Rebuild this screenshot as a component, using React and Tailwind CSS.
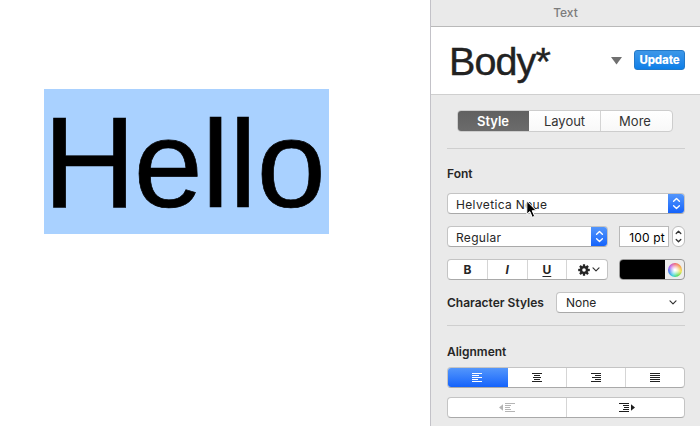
import React from "react";

const field = "border border-[#c4c4c4] border-b-[#a9a9a9] bg-white rounded-[4px]";

function UpDown({ className = "" }) {
  return (
    <span className={`flex w-[17px] items-center justify-center bg-gradient-to-b from-[#5698fb] to-[#0f5ffb] ${className}`}>
      <svg width="9" height="13" viewBox="0 0 9 13" fill="none" stroke="#fff" strokeWidth="1.4" strokeLinecap="round" strokeLinejoin="round">
        <path d="M1.6 4.2 4.5 1.5l2.9 2.7M1.6 8.8l2.9 2.7 2.9-2.7" />
      </svg>
    </span>
  );
}

function Lines({ rows, color }) {
  return (
    <svg width="11" height="10" viewBox="0 0 11 10" fill={color} shapeRendering="crispEdges">
      {rows.map(([x, w], i) => (
        <rect key={i} x={x} y={i * 2} width={w} height="1" />
      ))}
    </svg>
  );
}

function Chevron() {
  return (
    <svg width="8" height="5" viewBox="0 0 8 5" fill="none" stroke="#333" strokeWidth="1.2" strokeLinecap="round" strokeLinejoin="round">
      <path d="m1 .8 3 3 3-3" />
    </svg>
  );
}

function Gear() {
  return (
    <svg width="12" height="12" viewBox="-6 -6 12 12">
      {[0, 45, 90, 135].map((a) => (
        <rect key={a} x="-1.15" y="-5.8" width="2.3" height="11.6" rx=".4" fill="#262626" transform={`rotate(${a})`} />
      ))}
      <circle r="4.1" fill="#262626" />
      <circle r="1.8" fill="#fff" />
    </svg>
  );
}

export default function App() {
  return (
    <div className="relative flex h-[426px] w-[700px] overflow-hidden bg-white font-['Inter','Liberation_Sans',sans-serif] text-[12px] text-[#262626]">
      <main className="w-[430px] shrink-0 pl-[44px] pt-[89px]">
        <div className="h-[145px] w-[285px] whitespace-nowrap bg-[#a9d1ff] font-['Liberation_Sans',Arial,sans-serif] text-[129px] leading-[147px] text-black [-webkit-text-stroke:0.7px_#000]">
          <span className="-ml-[1px] tracking-[-2.5px]">H</span><span className="text-[124px]"><span className="tracking-[-1px]">e</span>llo</span>
        </div>
      </main>

      <aside className="flex w-[270px] shrink-0 flex-col border-l border-[#c3c2c8] bg-[#eaeaea]">
        <header className="h-[27px] border-b border-[#b9b9b9] text-center text-[12px] font-medium leading-[26px] text-[#7c7c7c]">Text</header>
        <section className="flex h-[68px] items-center border-b border-[#cfcfcf] bg-white pl-[18px] pr-[15px]">
          <span className="w-[162px] whitespace-nowrap font-['Liberation_Sans',Arial,sans-serif] text-[39.5px] leading-[66px] tracking-[-0.9px] text-[#222] [-webkit-text-stroke:0.4px_#222]">Body*</span>
          <svg width="11" height="8" viewBox="0 0 11 8"><path d="M0 0h11L5.5 7.5z" fill="#707070" /></svg>
          <button className="-mt-px ml-auto h-[20px] w-[51px] rounded-[3px] border border-[#2379c8] bg-gradient-to-b from-[#3c97e8] to-[#0b7fe8] text-[11.5px] font-extrabold leading-[19px] tracking-[-0.15px] text-white">Update</button>
        </section>

        <div className="flex flex-col pl-[16px] pr-[15px]">
          <nav className="mx-[10px] mt-[15px] flex h-[22px] w-[216px] overflow-hidden rounded-[4px] border border-[#cdcdcd] bg-gradient-to-b from-white to-[#f8f8f8] text-center text-[13px] leading-[21px] text-[#333]">
            <span className="-my-px -ml-px w-[72px] bg-gradient-to-b from-[#606060] to-[#6c6c6c] font-semibold leading-[23px] text-white">Style</span>
            <span className="w-[72px] border-r border-[#d4d4d4]">Layout</span>
            <span className="flex-1 pr-[3px]">More</span>
          </nav>
          <hr className="mt-[16px] border-[#cfcfcf]" />
          <h2 className="mt-[15px] h-[20px] text-[12px] font-semibold leading-[20px]">Font</h2>
          <div className={`mt-[9px] flex h-[21px] justify-between overflow-hidden ${field}`}>
            <span className="pl-[8px] pt-px text-[12px] leading-[20px] tracking-[0.35px]">Helvetica Neue</span>
            <UpDown className="-my-px -mr-px" />
          </div>
          <div className="mt-[12px] flex h-[21px]">
            <div className={`flex w-[161px] justify-between overflow-hidden ${field}`}>
              <span className="pl-[8px] pt-px leading-[20px] tracking-[0.3px]">Regular</span>
              <UpDown className="-my-px -mr-px" />
            </div>
            <div className="ml-[11px] w-[50px] border border-[#b9b9b9] bg-white pr-[3px] pt-px text-right leading-[20px] tracking-[0.2px] text-black">100 pt</div>
            <div className="ml-[3px] flex w-[13px] items-center justify-center rounded-[6px] border border-[#bdbdbd] bg-white">
              <svg width="7" height="13" viewBox="0 0 7 13" fill="none" stroke="#333" strokeWidth="1.3" strokeLinecap="round" strokeLinejoin="round"><path d="M1.2 3.5 3.5 1.2l2.3 2.3M1.2 9.5l2.3 2.3 2.3-2.3" /></svg>
            </div>
          </div>
          <div className="mt-[12px] flex h-[21px]">
            <div className={`grid w-[161px] grid-cols-4 text-center leading-[19px] ${field}`}>
              <span className="border-r border-[#d5d5d5] font-bold">B</span>
              <span className="border-r border-[#d5d5d5] font-bold italic">I</span>
              <span className="border-r border-[#d5d5d5] font-bold underline underline-offset-2">U</span>
              <span className="flex items-center justify-center gap-[2px] pl-[3px]"><Gear /><Chevron /></span>
            </div>
            <div className="ml-[11px] flex w-[66px] overflow-hidden rounded-[4px] border border-[#999] bg-[#ededed]">
              <span className="-my-px -ml-px w-[46px] bg-black" />
              <span className="flex flex-1 items-center justify-center">
                <span className="h-[14px] w-[14px] rounded-full bg-[radial-gradient(circle,#fff_8%,#ffffffa0_32%,#ffffff00_65%),conic-gradient(#ef6a76,#f5a04a,#f1e34d,#58df5a,#38d2e0,#4b76ef,#bf5cea,#ef6a76)]" />
              </span>
            </div>
          </div>
          <div className="mt-[12px] flex h-[21px] items-center justify-between">
            <span className="whitespace-nowrap font-semibold">Character Styles</span>
            <div className={`flex h-[21px] w-[129px] items-center justify-between pl-[9px] pr-[7px] ${field}`}><span>None</span><Chevron /></div>
          </div>
          <hr className="mt-[12px] border-[#cfcfcf]" />
          <h2 className="mt-[16px] h-[20px] font-semibold leading-[20px]">Alignment</h2>
          <div className={`mt-[5px] flex h-[21px] overflow-hidden ${field}`}>
            <span className="-my-px -ml-px flex w-[61px] items-center justify-center bg-gradient-to-b from-[#5698fb] to-[#0f5ffb]"><Lines color="#fff" rows={[[0, 10], [0, 7], [0, 10], [0, 6], [0, 10]]} /></span>
            <span className="flex w-[59px] items-center justify-center border-r border-[#d5d5d5]"><Lines color="#222" rows={[[0, 10], [2, 6], [1, 8], [2, 6], [0, 10]]} /></span>
            <span className="flex w-[59px] items-center justify-center border-r border-[#d5d5d5]"><Lines color="#222" rows={[[0, 10], [4, 6], [1, 9], [4, 6], [0, 10]]} /></span>
            <span className="flex flex-1 items-center justify-center"><Lines color="#222" rows={[[0, 10], [0, 10], [0, 10], [0, 10], [0, 10]]} /></span>
          </div>
          <div className={`mt-[9px] flex h-[21px] ${field}`}>
            <span className="flex w-[119px] items-center justify-center border-r border-[#d5d5d5]">
              <svg width="16" height="9" viewBox="0 0 16 9" fill="#b5b5b5"><path d="M0 4.5 4 1.2v6.6zM6 0h10v1H6zM6 2h6v1H6zM6 4h5v1H6zM6 6h6v1H6zM6 8h10v1H6z" /></svg>
            </span>
            <span className="flex flex-1 items-center justify-center pl-[2px]">
              <svg width="16" height="9" viewBox="0 0 16 9" fill="#1d1d1d"><path d="m16 4.5-4-3.3v6.6zM0 0h10v1H0zM4 2h6v1H4zM5 4h5v1H5zM4 6h6v1H4zM0 8h10v1H0z" /></svg>
            </span>
          </div>
        </div>
      </aside>

      <svg className="absolute left-[526px] top-[200px]" width="12" height="19" viewBox="0 0 12 19" fill="#000" stroke="#fff" strokeWidth="1" strokeLinejoin="round">
        <path d="M.8 1v13.3l3-2.8 2.5 5.8 2.4-1-2.5-5.6h4.1z" />
      </svg>
    </div>
  );
}
